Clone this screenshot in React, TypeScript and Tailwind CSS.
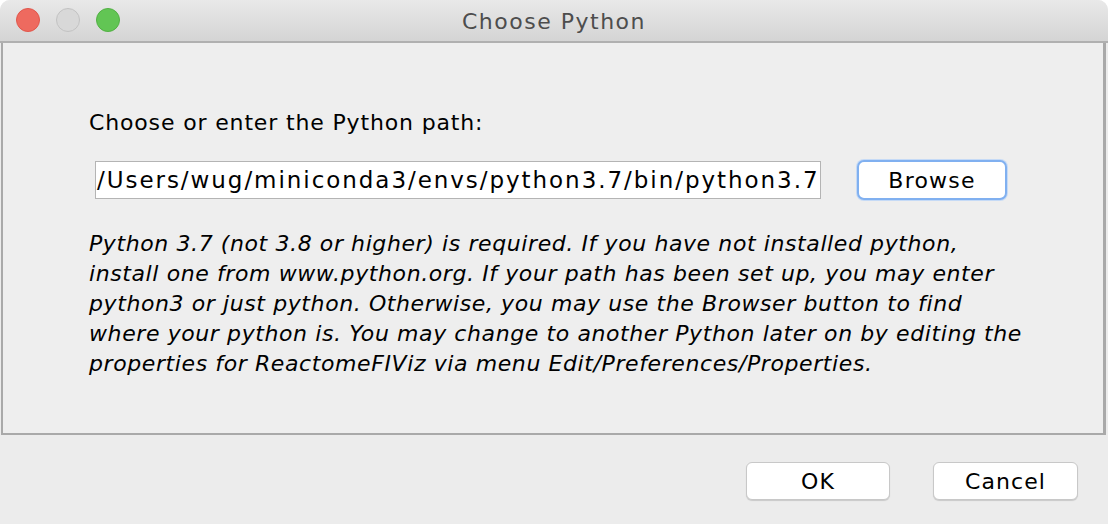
export default function App() {
  const lines = [
    "Python 3.7 (not 3.8 or higher) is required. If you have not installed python,",
    "install one from www.python.org. If your path has been set up, you may enter",
    "python3 or just python. Otherwise, you may use the Browser button to find",
    "where your python is. You may change to another Python later on by editing the",
    "properties for ReactomeFIViz via menu Edit/Preferences/Properties.",
  ];

  return (
    <div
      className="flex h-[524px] w-[1108px] flex-col overflow-hidden rounded-t-[10px] bg-[#ececec] text-black"
      style={{ fontFamily: '"DejaVu Sans", "Liberation Sans", sans-serif' }}
    >
      {/* title bar */}
      <div className="relative flex h-[43px] shrink-0 items-center justify-center border-b-2 border-[#b0b0b0] bg-gradient-to-b from-[#e9e9e9] to-[#d4d4d4]">
        <div className="absolute left-[16px] top-[8px] flex gap-[16px]">
          <span className="h-[24px] w-[24px] rounded-full border border-[#e0574c] bg-[#ee6a5f]" />
          <span className="h-[24px] w-[24px] rounded-full border border-[#c2c2c2] bg-[#d8d8d8]" />
          <span className="h-[24px] w-[24px] rounded-full border border-[#52b044] bg-[#62c554]" />
        </div>
        <span className="pt-[1px] text-[22px] tracking-[1.5px] text-[#4d4d4d]">Choose Python</span>
      </div>

      {/* content panel */}
      <div className="ml-[1px] mr-[2px] h-[392px] shrink-0 border-b-2 border-l-2 border-r-[3px] border-[#a9a9a9] bg-[#eeeeee] pl-[86px] pt-[67px]">
        <div className="text-[22px] leading-[26px] tracking-[0.85px]">Choose or enter the Python path:</div>
        <div className="mt-[24px] flex items-center">
          <div className="ml-[6px] flex h-[38px] w-[726px] items-center overflow-hidden whitespace-nowrap border border-[#b4b4b4] bg-white pl-[1px] text-[23px] tracking-[1.95px]">
            /Users/wug/miniconda3/envs/python3.7/bin/python3.7
          </div>
          <button className="ml-[36px] flex h-[40px] w-[150px] items-center justify-center rounded-[7px] border-2 border-[#80b0f0] bg-white text-[22px] tracking-[1.2px] shadow-[0_0_0_1px_#c5daf6]">
            Browse
          </button>
        </div>
        <div className="mt-[29px] text-[22px] italic leading-[30px] tracking-[0.6px]">
          {lines.map((l) => (
            <div key={l} className="whitespace-nowrap">
              {l}
            </div>
          ))}
        </div>
      </div>

      {/* footer */}
      <div className="flex flex-1 items-start justify-end gap-[43px] pr-[30px] pt-[27px]">
        <button className="flex h-[38px] w-[144px] items-center justify-center rounded-[6px] border border-[#c8c8c8] bg-white pt-[1px] text-[22px] tracking-[1.1px] shadow-[0_1px_1px_rgba(0,0,0,0.15)]">
          OK
        </button>
        <button className="flex h-[38px] w-[145px] items-center justify-center rounded-[6px] border border-[#c8c8c8] bg-white pt-[1px] text-[22px] tracking-[1.1px] shadow-[0_1px_1px_rgba(0,0,0,0.15)]">
          Cancel
        </button>
      </div>
    </div>
  );
}
